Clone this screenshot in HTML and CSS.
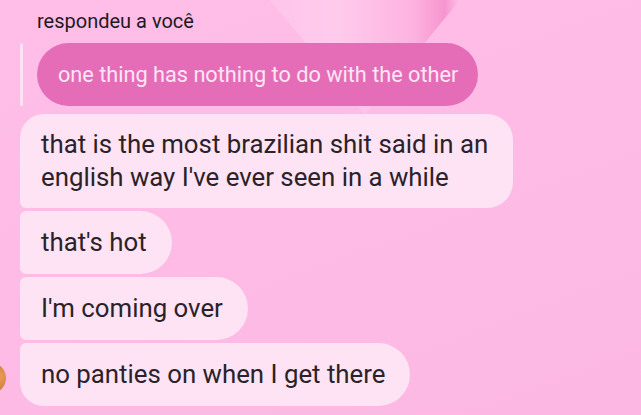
FILE: index.html
```html
<!DOCTYPE html>
<html lang="pt">
<head>
  <meta charset="UTF-8" />
  <title>Chat</title>
  <meta name="viewport" content="width=device-width, initial-scale=1.0"/>
  <link rel="stylesheet" href="styles.css">
</head>
<body>

  <div class="heart-tip"></div>

  <div class="thread">
    <div class="reply-label">respondeu a você</div>

    <div class="reply-row">
      <div class="reply-bar"></div>
      <div class="quoted">one thing has nothing to do with the other</div>
    </div>

    <div class="messages">
      <div class="bubble first">that is the most brazilian shit said in an<br>english way I've ever seen in a while</div>
      <div class="bubble">that's hot</div>
      <div class="bubble">I'm coming over</div>
      <div class="bubble last">no panties on when I get there</div>
    </div>
  </div>

  <div class="avatar"></div>

</body>
</html>
```

FILE: styles.css
```css
html, body {
  margin: 0;
  height: 100%;
}

body {
  font-family: 'Roboto', 'Noto Sans', sans-serif;
  background: linear-gradient(160deg, #ffbee7 0%, #fdbbe5 50%, #fcb8e3 100%);
  position: relative;
  overflow: hidden;
}

/* background wallpaper: tip of a big heart */
.heart-tip {
  position: absolute;
  left: 270px;
  top: 0;
  width: 190px;
  height: 115px;
  clip-path: polygon(0 0, 100% 0, 50% 100%);
  background: linear-gradient(90deg, #ffc4ea 0%, #ffcbed 35%, #fdb3e0 75%, #f795d0 92%, #ffc0e8 100%);
}

.thread {
  position: relative;
  padding: 9px 0 0 20px;
}

.reply-label {
  font-size: 20px;
  color: #1e1a1d;
  margin-left: 17px;
  height: 34px;
}

.reply-row {
  display: flex;
  gap: 14px;
  align-items: stretch;
}

.reply-bar {
  width: 3px;
  border-radius: 2px;
  background-color: #fde2f2;
}

.quoted {
  background-color: #e56db8;
  color: #fde6f4;
  font-size: 21.7px;
  padding: 0 20px 0 21px;
  height: 63px;
  line-height: 63px;
  border-radius: 32px;
}

.messages {
  display: flex;
  flex-direction: column;
  align-items: flex-start;
  gap: 3px;
  margin-top: 8px;
}

.bubble {
  background-color: #fde3f3;
  color: #2a2228;
  font-size: 25.8px;
  line-height: 33px;
  padding: 15px 25px 15px 21px;
  border-radius: 6px 32px 32px 6px;
}

.bubble.first {
  padding-top: 14px;
  padding-bottom: 14px;
  border-radius: 24px 26px 26px 6px;
}

.bubble.last {
  border-bottom-left-radius: 24px;
}

.avatar {
  position: absolute;
  left: -22px;
  top: 363px;
  width: 28px;
  height: 30px;
  border-radius: 50%;
  background: radial-gradient(circle at 75% 45%, #ec9d58, #b5622a);
}
```
